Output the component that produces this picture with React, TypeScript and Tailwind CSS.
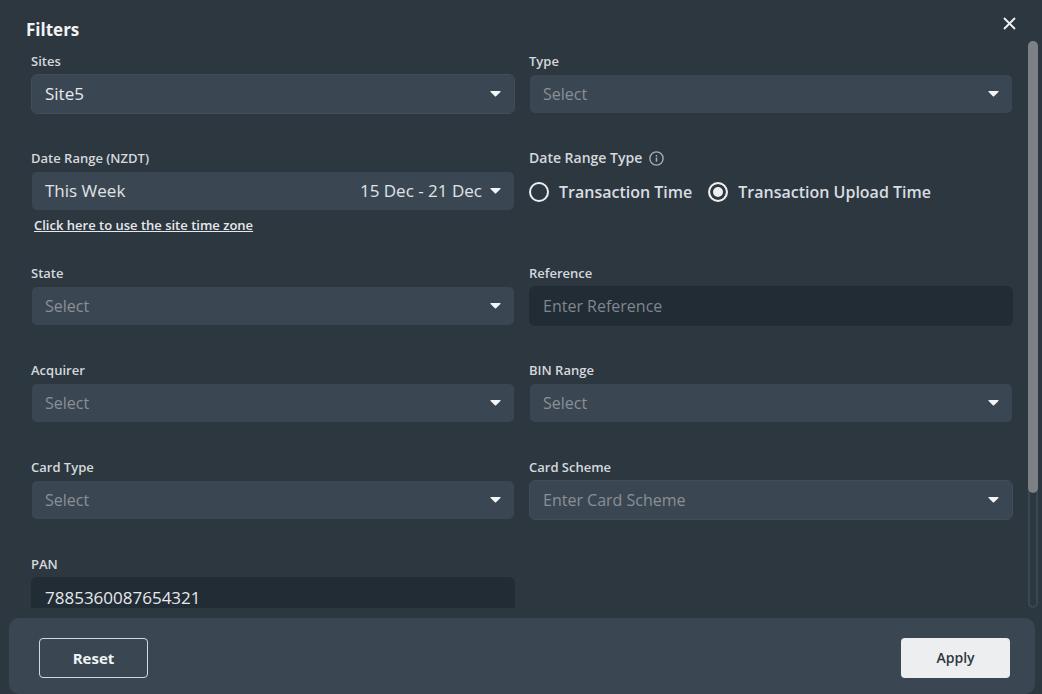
import { type ReactNode, useEffect, useRef, useState } from "react";

const SELECT_BOX =
  "block w-full h-10 appearance-none rounded-md border bg-clip-padding bg-[#3a4753] pl-[13px] pr-10 outline-none";
const INPUT_BOX =
  "block w-full h-10 rounded-md bg-[#222c35] px-[14px] text-[#e6e9ec] placeholder-[#7f868e] outline-none";

function Caret() {
  return (
    <svg width="11" height="6" viewBox="0 0 11 6" className="shrink-0 fill-[#f4f5f6]" aria-hidden="true">
      <path d="M0.8 0H10.2Q10.9 0.3 10.4 0.9L6.1 5.3Q5.5 5.8 4.9 5.3L0.6 0.9Q0.1 0.3 0.8 0Z" />
    </svg>
  );
}

function Label({ htmlFor, children }: { htmlFor: string; children: ReactNode }) {
  return (
    <label htmlFor={htmlFor} className="block w-fit mb-[3px] text-[13px] leading-5 font-semibold text-[#d5d9dd]">
      {children}
    </label>
  );
}

interface SelectFieldProps {
  id: string;
  label: string;
  placeholder?: string;
  options: string[];
  initial?: string;
  outlined?: boolean;
}

function SelectField({ id, label, placeholder = "Select", options, initial = "", outlined }: SelectFieldProps) {
  const [value, setValue] = useState(initial);

  return (
    <div>
      <Label htmlFor={id}>{label}</Label>
      <div className="relative">
        <select
          id={id}
          value={value}
          onChange={e => setValue(e.target.value)}
          className={`${SELECT_BOX} ${outlined ? "border-[#414d59]" : "border-transparent"} ${
            value ? "text-[17px] text-[#e6e9ec]" : "text-base text-[#8b8f95]"
          }`}
        >
          <option value="">{placeholder}</option>
          {options.map(option => (
            <option key={option} value={option}>
              {option}
            </option>
          ))}
        </select>
        <span className="pointer-events-none absolute inset-y-0 right-[14px] flex items-center">
          <Caret />
        </span>
      </div>
    </div>
  );
}

function RadioOption({ label, checked, onChange }: { label: string; checked: boolean; onChange: () => void }) {
  return (
    <label className="flex items-center gap-[10px] text-base font-semibold text-[#d9dde1]">
      <input
        type="radio"
        name="dateRangeType"
        checked={checked}
        onChange={onChange}
        className="size-5 shrink-0 appearance-none rounded-full border-2 border-[#eceef0] checked:bg-[#eceef0] checked:shadow-[inset_0_0_0_3px_#2d3740]"
      />
      {label}
    </label>
  );
}

export default function App() {
  const [rangeType, setRangeType] = useState("upload");
  const [reference, setReference] = useState("");
  const [pan, setPan] = useState("7885360087654321");
  const [thumb, setThumb] = useState({ top: 0, height: 80 });
  const scroller = useRef<HTMLDivElement>(null);

  const updateThumb = () => {
    const el = scroller.current;
    if (!el) return;
    setThumb({
      top: (el.scrollTop / el.scrollHeight) * 100,
      height: (el.clientHeight / el.scrollHeight) * 100,
    });
  };

  useEffect(() => {
    updateThumb();
    window.addEventListener("resize", updateThumb);
    return () => window.removeEventListener("resize", updateThumb);
  }, []);

  return (
    <div className="flex h-screen flex-col bg-[#2d3740] font-['Open_Sans','Noto_Sans',sans-serif]">
      {/* Header */}
      <header className="flex h-[41px] shrink-0 items-start justify-between pl-[26px] pr-[25px]">
        <h1 className="mt-[18px] text-[17px] leading-6 font-bold text-[#f1f3f5]">Filters</h1>
        <button type="button" aria-label="Close" className="mt-[16px] p-px">
          <svg width="13" height="13" viewBox="0 0 13 13" className="stroke-[#f1f3f5]" fill="none" strokeWidth="1.8">
            <path d="M1 1L12 12M12 1L1 12" />
          </svg>
        </button>
      </header>

      {/* Fields */}
      <div className="flex min-h-0 flex-1 pr-1">
        <div
          ref={scroller}
          onScroll={updateThumb}
          className="min-w-0 flex-1 overflow-y-auto pl-[31px] pr-[15px] pt-[10px] pb-[135px] [scrollbar-width:none]"
        >
          <div className="grid grid-cols-2 gap-x-[14px] gap-y-[34px]">
            <SelectField id="sites" label="Sites" options={["Site5"]} initial="Site5" outlined />
            <SelectField id="type" label="Type" options={["Purchase", "Refund"]} />

            <div>
              <Label htmlFor="dateRange">Date Range (NZDT)</Label>
              <button
                id="dateRange"
                type="button"
                className="flex h-10 w-full items-center rounded-md border border-transparent bg-[#3a4753] bg-clip-padding pl-[13px] pr-[13px] text-[17px] text-[#e0e3e6]"
              >
                <span>This Week</span>
                <span className="ml-auto mr-2">15 Dec - 21 Dec</span>
                <Caret />
              </button>
              <a
                href="#timezone"
                className="ml-[3px] mt-1 -mb-[6px] block w-fit text-[13px] leading-5 font-semibold text-[#e6e9ec] underline"
              >
                Click here to use the site time zone
              </a>
            </div>

            <fieldset>
              <legend className="mb-[3px] flex items-center gap-[7px] text-sm leading-5 font-semibold text-[#d5d9dd]">
                Date Range Type
                <svg width="15" height="15" viewBox="0 0 15 15" fill="none" className="stroke-[#a5abb1]" aria-hidden="true">
                  <circle cx="7.5" cy="7.5" r="6.6" strokeWidth="1.4" />
                  <path d="M7.5 6.6V10.8M7.5 4V5.5" strokeWidth="1.5" />
                </svg>
              </legend>
              <div className="flex h-[42px] items-center gap-4">
                <RadioOption
                  label="Transaction Time"
                  checked={rangeType === "time"}
                  onChange={() => setRangeType("time")}
                />
                <RadioOption
                  label="Transaction Upload Time"
                  checked={rangeType === "upload"}
                  onChange={() => setRangeType("upload")}
                />
              </div>
            </fieldset>

            <SelectField id="state" label="State" options={["Approved", "Declined"]} />
            <div>
              <Label htmlFor="reference">Reference</Label>
              <input
                id="reference"
                type="text"
                value={reference}
                onChange={e => setReference(e.target.value)}
                placeholder="Enter Reference"
                className={`${INPUT_BOX} text-base`}
              />
            </div>

            <SelectField id="acquirer" label="Acquirer" options={["Acquirer1"]} />
            <SelectField id="binRange" label="BIN Range" options={["BIN1"]} />
            <SelectField id="cardType" label="Card Type" options={["Credit", "Debit"]} />
            <SelectField
              id="cardScheme"
              label="Card Scheme"
              placeholder="Enter Card Scheme"
              options={["Visa", "Mastercard"]}
              outlined
            />

            <div>
              <Label htmlFor="pan">PAN</Label>
              <input
                id="pan"
                type="text"
                value={pan}
                onChange={e => setPan(e.target.value)}
                className={`${INPUT_BOX} text-[17px]`}
              />
            </div>
          </div>
        </div>

        {/* Scrollbar */}
        <div className="w-[10px] shrink-0 rounded-full shadow-[inset_0_0_0_2px_#3a4753]" aria-hidden="true">
          <div
            className="relative rounded-full bg-[#7d8085]"
            style={{ height: `${thumb.height}%`, top: `${thumb.top}%` }}
          />
        </div>
      </div>

      {/* Actions */}
      <footer className="ml-[9px] mr-[7px] mt-[10px] flex h-[76px] shrink-0 items-center justify-between rounded-[10px] bg-[#3a4753] pl-[30px] pr-[25px] pt-1">
        <button
          type="button"
          onClick={() => {
            setReference("");
            setPan("");
          }}
          className="h-10 w-[109px] rounded-[4px] border border-[#d5d9dd] text-[15px] font-bold text-[#f1f3f5]"
        >
          Reset
        </button>
        <button type="button" className="h-10 w-[109px] rounded-[4px] bg-[#eceef0] text-sm font-semibold text-[#2d3740]">
          Apply
        </button>
      </footer>
    </div>
  );
}
